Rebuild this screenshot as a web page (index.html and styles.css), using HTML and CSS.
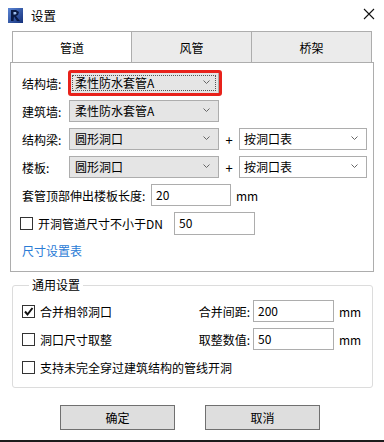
FILE: index.html
```html
<!DOCTYPE html>
<html lang="zh-CN">
<head>
  <meta charset="UTF-8" />
  <title>设置</title>
  <link rel="stylesheet" href="styles.css">
</head>
<body>
  <div class="dialog">

    <div class="titlebar">
      <svg class="app-icon" width="15" height="15" viewBox="0 0 15 15">
        <defs>
          <linearGradient id="ig" x1="0" y1="0" x2="1" y2="1">
            <stop offset="0" stop-color="#5b86d6" />
            <stop offset="1" stop-color="#14307a" />
          </linearGradient>
        </defs>
        <rect x="0" y="0" width="15" height="15" fill="url(#ig)" />
        <polygon points="3,2 8,2 11,4 10,7 8,8 12,13 9,13 6,8.5 5.5,13 3,13" fill="#0a1a45" />
        <polygon points="5.5,4 8,4 8.6,5.5 7.4,6.6 5.5,6.6" fill="#9fc0f0" />
      </svg>
      <span class="title">设置</span>
      <svg class="close" width="12" height="12" viewBox="0 0 12 12">
        <path d="M1 1 L11 11 M11 1 L1 11" stroke="#111" stroke-width="1.1" />
      </svg>
    </div>

    <div class="tabs">
      <div class="tab active">管道</div>
      <div class="tab">风管</div>
      <div class="tab">桥架</div>
    </div>

    <div class="panel">
      <div class="row">
        <span class="label">结构墙:</span>
        <div class="combo marked">
          <span>柔性防水套管A</span>
          <svg class="chev" width="7" height="5" viewBox="0 0 7 5"><path d="M0.5 0.5 L3.5 3.5 L6.5 0.5" fill="none" stroke="#666" /></svg>
          <span class="mark"></span>
        </div>
      </div>
      <div class="row">
        <span class="label">建筑墙:</span>
        <div class="combo">
          <span>柔性防水套管A</span>
          <svg class="chev" width="7" height="5" viewBox="0 0 7 5"><path d="M0.5 0.5 L3.5 3.5 L6.5 0.5" fill="none" stroke="#666" /></svg>
        </div>
      </div>
      <div class="row">
        <span class="label">结构梁:</span>
        <div class="combo">
          <span>圆形洞口</span>
          <svg class="chev" width="7" height="5" viewBox="0 0 7 5"><path d="M0.5 0.5 L3.5 3.5 L6.5 0.5" fill="none" stroke="#666" /></svg>
        </div>
        <span class="plus">+</span>
        <div class="combo edit">
          <span>按洞口表</span>
          <svg class="chev" width="7" height="5" viewBox="0 0 7 5"><path d="M0.5 0.5 L3.5 3.5 L6.5 0.5" fill="none" stroke="#666" /></svg>
        </div>
      </div>
      <div class="row">
        <span class="label">楼板:</span>
        <div class="combo">
          <span>圆形洞口</span>
          <svg class="chev" width="7" height="5" viewBox="0 0 7 5"><path d="M0.5 0.5 L3.5 3.5 L6.5 0.5" fill="none" stroke="#666" /></svg>
        </div>
        <span class="plus">+</span>
        <div class="combo edit">
          <span>按洞口表</span>
          <svg class="chev" width="7" height="5" viewBox="0 0 7 5"><path d="M0.5 0.5 L3.5 3.5 L6.5 0.5" fill="none" stroke="#666" /></svg>
        </div>
      </div>
      <div class="row">
        <span class="label-long">套管顶部伸出楼板长度:</span>
        <div class="field f-len">20</div>
        <span class="unit">mm</span>
      </div>
      <div class="row">
        <span class="check"></span>
        <span class="check-text dn-text">开洞管道尺寸不小于DN</span>
        <div class="field f-dn">50</div>
      </div>
      <div class="row">
        <span class="link">尺寸设置表</span>
      </div>
    </div>

    <fieldset class="group">
      <legend>通用设置</legend>
      <div class="grow">
        <div class="gleft">
          <span class="check checked">
            <svg width="11" height="11" viewBox="0 0 11 11"><path d="M2 5.5 L4.5 8.5 L9.5 2" fill="none" stroke="#111" stroke-width="2" /></svg>
          </span>
          <span class="check-text">合并相邻洞口</span>
        </div>
        <span class="glabel">合并间距:</span>
        <div class="field f-g">200</div>
        <span class="gunit">mm</span>
      </div>
      <div class="grow">
        <div class="gleft">
          <span class="check"></span>
          <span class="check-text">洞口尺寸取整</span>
        </div>
        <span class="glabel">取整数值:</span>
        <div class="field f-g">50</div>
        <span class="gunit">mm</span>
      </div>
      <div class="grow">
        <span class="check"></span>
        <span class="check-text">支持未完全穿过建筑结构的管线开洞</span>
      </div>
    </fieldset>

    <div class="buttons">
      <div class="btn">确定</div>
      <div class="btn">取消</div>
    </div>

  </div>
</body>
</html>
```

FILE: styles.css
```css
* {
  margin: 0;
  padding: 0;
  box-sizing: border-box;
}

body {
  font-family: "Noto Sans CJK SC", "Microsoft YaHei", sans-serif;
  font-size: 12px;
  color: #000;
  background: #fff;
}

.dialog {
  width: 384px;
  height: 442px;
  overflow: hidden;
  border-bottom: 2px solid #1c1c1c;
  display: flex;
  flex-direction: column;
  white-space: nowrap;
}

/* title bar */
.titlebar {
  height: 31px;
  display: flex;
  align-items: center;
  padding: 0 9px 1px 8px;
}

.app-icon {
  margin-right: 8px;
}

.title {
  font-size: 12.5px;
  flex: 1;
}

.close {
  margin-top: -2px;
}

/* tabs */
.tabs {
  display: flex;
  height: 31px;
  margin-left: 12px;
  width: 360px;
}

.tab {
  flex: 1;
  display: flex;
  align-items: center;
  justify-content: center;
  border: 1px solid #adadad;
  border-bottom: none;
  background: #ebebeb;
  padding-top: 1px;
}

.tab + .tab {
  border-left: none;
}

.tab.active {
  background: #fff;
  flex: 0 0 120px;
}

/* main panel */
.panel {
  margin-left: 10px;
  width: 364px;
  height: 210px;
  border: 1px solid #adadad;
  padding: 9px 0 0 11px;
  display: flex;
  flex-direction: column;
  gap: 6px;
}

.row {
  display: flex;
  align-items: center;
  height: 22px;
}

.label {
  width: 47px;
}

.label-long {
  width: 130px;
}

.combo {
  position: relative;
  display: flex;
  align-items: center;
  justify-content: space-between;
  width: 150px;
  height: 22px;
  border: 1px solid #adadad;
  background: #e5e5e5;
  padding: 0 8px 1px 5px;
}

.combo.edit {
  width: 128px;
  background: #fff;
  padding-left: 4px;
}

.chev {
  flex: none;
}

/* red annotation frame around the first box */
.mark {
  position: absolute;
  left: -2px;
  top: -3px;
  right: -4px;
  bottom: -3px;
  border: 3px solid #e8221b;
  border-radius: 3px;
}

.combo.marked::after {
  content: "";
  position: absolute;
  left: 2px;
  top: 2px;
  right: 2px;
  bottom: 2px;
  border: 1px dotted #555;
}

.plus {
  width: 20px;
  text-align: center;
  font-size: 13px;
}

.field {
  height: 22px;
  border: 1px solid #adadad;
  background: #fff;
  padding: 0 0 1px 4px;
  display: flex;
  align-items: center;
}

.f-len {
  width: 80px;
  margin-left: -1px;
}

.unit {
  margin-left: 5px;
}

.check {
  width: 13px;
  height: 13px;
  border: 1px solid #333;
  background: #fff;
  display: inline-flex;
  align-items: center;
  justify-content: center;
  margin-left: -2px;
  flex: none;
}

.check-text {
  margin-left: 5px;
}

.dn-text {
  width: 136px;
}

.f-dn {
  width: 81px;
  height: 23px;
}

.link {
  color: #2a7bd6;
  margin-top: -2px;
}

/* general settings group */
.group {
  margin: 4px 0 0 12px;
  width: 361px;
  border: 1px solid #dcdcdc;
  border-radius: 3px;
  padding: 6px 0 9px 11px;
  display: flex;
  flex-direction: column;
  gap: 6px;
}

.group legend {
  margin-left: 5px;
  padding: 0 3px;
  line-height: 18px;
}

.grow {
  display: flex;
  align-items: center;
  height: 22px;
}

.gleft {
  display: flex;
  align-items: center;
  width: 170px;
}

.glabel {
  width: 59px;
  text-align: right;
  padding-right: 3px;
}

.f-g {
  width: 81px;
}

.gunit {
  margin-left: 5px;
}

/* buttons */
.buttons {
  display: flex;
  gap: 30px;
  margin-top: 17px;
  padding-left: 60px;
}

.btn {
  width: 115px;
  height: 25px;
  border: 1px solid #707070;
  background: #dedede;
  display: flex;
  align-items: center;
  justify-content: center;
}
```
